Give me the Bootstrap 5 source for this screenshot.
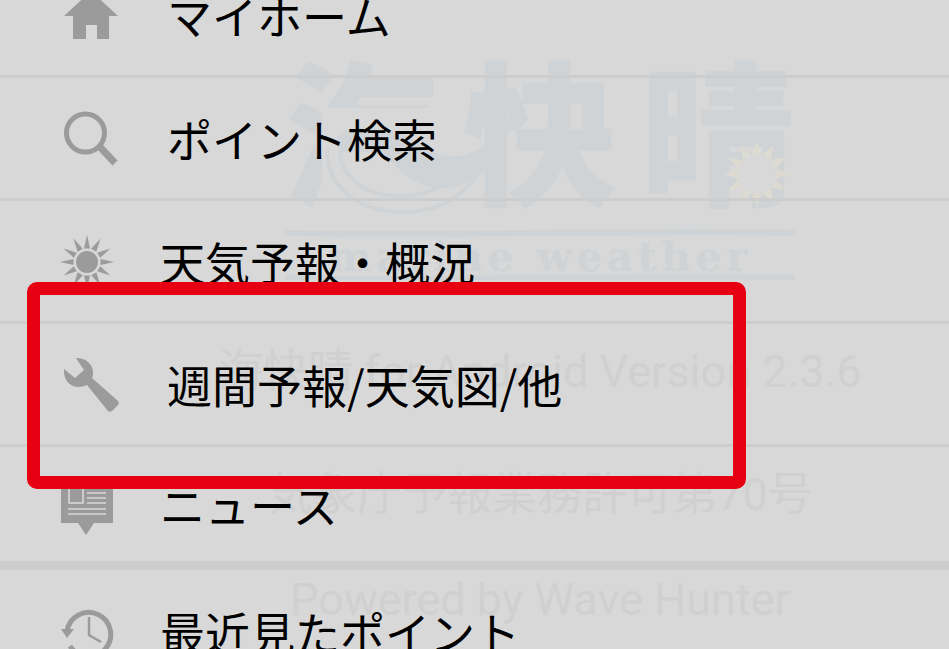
<!DOCTYPE html>
<html lang="ja">
<head>
  <meta charset="UTF-8">
  <meta name="viewport" content="width=device-width, initial-scale=1">
  <title>海快晴</title>
  <link href="https://cdn.jsdelivr.net/npm/bootstrap@5.3.2/dist/css/bootstrap.min.css" rel="stylesheet">
  <style>
    html, body { height: 100%; overflow: hidden; }
    body { background: #d8d8d8; font-family: "Roboto", "Noto Sans CJK JP", sans-serif; }
    .screen { height: 649px; overflow: hidden; }

    /* watermark behind the menu */
    .wm-layer { top: 0; left: 131px; right: 0; color: #d0d0d0; }
    .logo-box { width: 510px; height: 217px; margin-top: 63px; }
    .logo-kanji { font-family: "Noto Sans CJK JP", sans-serif; font-weight: 900; font-size: 155px; line-height: 125px; height: 147px; color: #cfd3d6; }
    .logo-art { top: 0; left: 0; }
    .logo-en { font-family: "DejaVu Serif", serif; font-weight: 700; font-size: 41px; line-height: 40px; letter-spacing: 4.4px; color: #cfd3d6; height: 40px; margin-top: 27px; white-space: nowrap; }
    .wm-line { font-size: 45px; line-height: 50px; white-space: nowrap; }
    .wm-v { margin-top: 67px; }
    .wm-p { margin-top: 73px; }
    .wm-n { margin-top: 55px; }

    /* menu */
    .menu-list { margin-top: -45px; background: transparent; border-radius: 0; }
    .menu-list .menu-row { height: 123px; padding: 0 0 0 52px; background: transparent; border-width: 0 0 3px; border-style: solid; border-color: #cdcdcd; border-radius: 0; color: #000; font-family: "Noto Sans CJK JP", sans-serif; font-size: 45px; line-height: 1; white-space: nowrap; }
    .menu-list .menu-row.row-end { border-bottom-width: 9px; }
    .menu-row svg { width: 72px; height: 72px; flex: none; fill: #9b9b9b; }
    .lbl-a { margin-left: 43px; }
    .lbl-b { margin-left: 36px; }

    .red-frame { left: 27px; top: 282px; width: 719px; height: 207px; border: 13.5px solid #e60012; border-radius: 10px; }
  </style>
</head>
<body>
  <div class="screen position-relative">

    <div class="wm-layer position-absolute d-flex flex-column align-items-center">
      <div class="logo-box position-relative">
        <div class="logo-kanji d-flex justify-content-between"><span>海</span><span>快</span><span>晴</span></div>
        <svg class="logo-art position-absolute" width="510" height="217" viewBox="285 63 510 217">
          <!-- whale over the kanji -->
          <path d="M322 108h134v104H322z" fill="#d8d8d8"/>
          <g fill="none" stroke="#cfd3d6" stroke-width="4">
            <path d="M327 150c0 36 30 62 76 62 44 0 78-24 94-82"/>
            <path d="M340 150c0 26 24 46 60 46 22 0 36-6 48-14"/>
          </g>
          <path d="M474 107C480 112 490 117 500 118 510 116 520 118 529 116 527 125 518 130 507 132 505 150 492 178 450 188 425 190 405 178 395 165 380 152 360 150 340 152 334 142 336 135 345 130 375 122 410 135 430 150 445 160 470 158 483 145 488 138 490 134 490 131 482 127 476 118 474 107Z" fill="#cfd3d6"/>
          <!-- sun on 晴 -->
          <g fill="#dddad2" id="logoSun"></g>
          <circle cx="757" cy="174" r="19" fill="#d8d8d8"/>
          <!-- wave rules -->
          <path d="M285 230c170 4 340-4 510 0v6c-170-3-340 3-510 0z M285 275c170 4 340-4 510 0v5c-170-2-340 2-510 0z" fill="#cfd3d6"/>
        </svg>
        <div class="logo-en text-center position-relative">marine weather</div>
      </div>
      <div class="wm-line wm-v">海快晴 for Android Version 2.3.6</div>
      <div class="wm-line wm-p">気象庁予報業務許可第70号</div>
      <div class="wm-line wm-n">Powered by Wave Hunter</div>
    </div>

    <ul class="list-group list-group-flush menu-list position-relative">
      <li class="list-group-item menu-row d-flex align-items-center">
        <svg viewBox="52 -21 72 72"><path d="M91-9 118 16H109V39H97V25H86V39H73V16H64Z"/></svg>
        <span class="lbl-a">マイホーム</span>
      </li>
      <li class="list-group-item menu-row d-flex align-items-center">
        <svg viewBox="52 102 72 72"><circle cx="85.5" cy="133" r="19" fill="none" stroke="#9b9b9b" stroke-width="5"/><path d="M99 146 115 163" fill="none" stroke="#9b9b9b" stroke-width="7"/></svg>
        <span class="lbl-a">ポイント検索</span>
      </li>
      <li class="list-group-item menu-row d-flex align-items-center">
        <svg viewBox="52 225 72 72" id="sunIcon"><circle cx="87" cy="262" r="11"/></svg>
        <span class="lbl-b">天気予報・概況</span>
      </li>
      <li class="list-group-item menu-row d-flex align-items-center">
        <svg viewBox="52 348 72 72"><path d="M76 358C86 358 93 364 93 373 93 375 93 376 92 378L118 401C119 403 119 404 118 405L112 411C111 412 109 412 108 411L87 385C84 386 82 387 79 387 70 387 63 380 64 369L75 378 84 370Z"/></svg>
        <span class="lbl-a">週間予報/天気図/他</span>
      </li>
      <li class="list-group-item menu-row row-end d-flex align-items-center">
        <svg viewBox="52 468 72 72"><path d="M61 477H113V523H94L86 535 78 523H61Z"/><g fill="none" stroke="#d8d8d8" stroke-width="1.6"><rect x="69" y="488" width="14" height="15"/><path d="M87 493H106M87 498H106M87 503H106M68 509H106M68 514H106"/></g></svg>
        <span class="lbl-b">ニュース</span>
      </li>
      <li class="list-group-item menu-row d-flex align-items-center">
        <svg viewBox="52 594 72 72"><path d="M67 629A22 22 0 1 1 70 644" fill="none" stroke="#9b9b9b" stroke-width="5"/><path d="M61 627H74L67 636Z"/><path d="M89 615V633L101 640" fill="none" stroke="#9b9b9b" stroke-width="2.5"/></svg>
        <span class="lbl-b">最近見たポイント</span>
      </li>
    </ul>

    <div class="red-frame position-absolute"></div>
  </div>

  <script src="https://cdn.jsdelivr.net/npm/bootstrap@5.3.2/dist/js/bootstrap.bundle.min.js"></script>
  <script>
    // sun rays: both suns are just triangles turned around a centre
    function addRays(el, cx, cy, count, r1, r2, w) {
      for (let i = 0; i < count; i++) {
        const p = document.createElementNS('http://www.w3.org/2000/svg', 'polygon');
        p.setAttribute('points', `${cx - w},${cy - r1} ${cx + w},${cy - r1} ${cx},${cy - r2}`);
        p.setAttribute('transform', `rotate(${i * 360 / count} ${cx} ${cy})`);
        el.appendChild(p);
      }
    }
    addRays(document.getElementById('sunIcon'), 87, 262, 12, 13.5, 27, 3);
    addRays(document.getElementById('logoSun'), 757, 174, 12, 19, 33, 5);
  </script>
</body>
</html>
